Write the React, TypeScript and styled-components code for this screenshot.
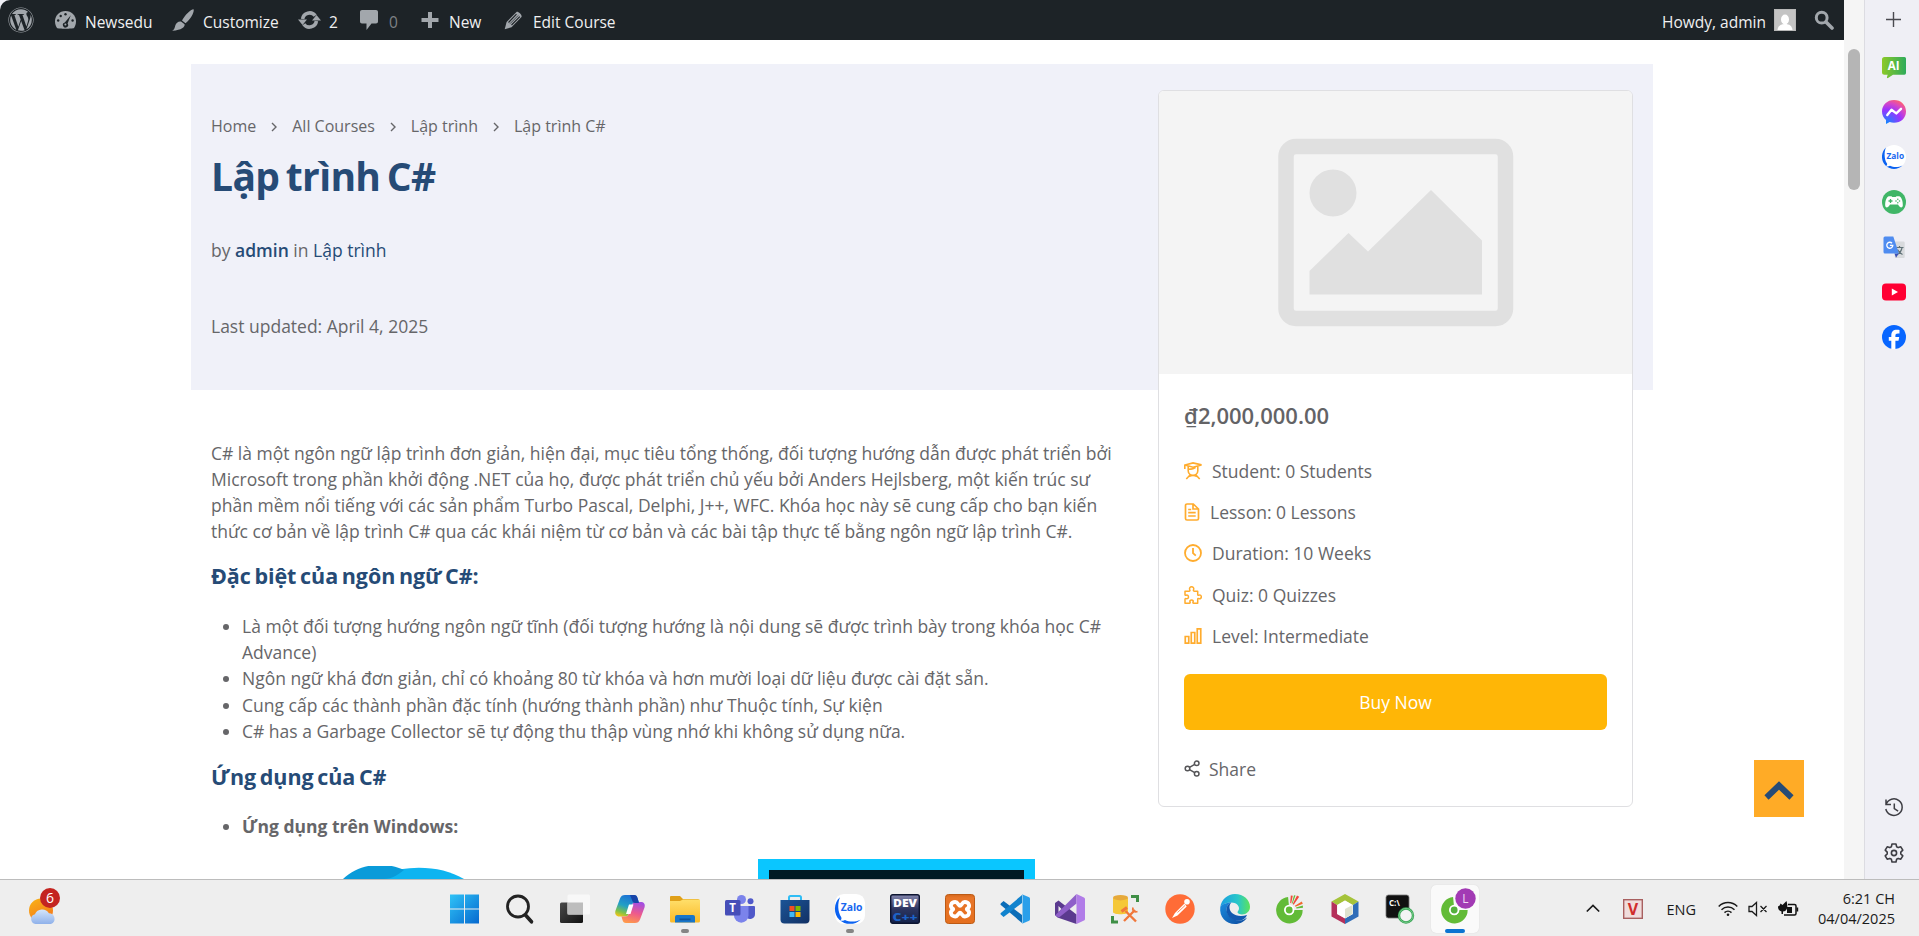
import React from 'react';
import styled, { createGlobalStyle } from 'styled-components';
import { FaWordpress } from 'react-icons/fa';

const GlobalStyle = createGlobalStyle`
  * { box-sizing: border-box; }
  body { margin: 0; background: #fff; overflow: hidden; }
`;

const Desktop = styled.div`
  display: flex;
  flex-direction: column;
  width: 1919px;
  height: 936px;
  font-family: 'Open Sans', 'Noto Sans', sans-serif;
  color: #666669;
  background: #fff;
`;
const Browser = styled.div`
  display: flex;
  height: 879px;
  background: #efeff5;
`;
const Viewport = styled.div`
  width: 1844px;
  height: 879px;
  overflow: hidden;
  background: #fff;
  border-top-left-radius: 10px;
  position: relative;
`;

/* ---------- admin bar ---------- */
const AdminBar = styled.header`
  display: flex;
  align-items: center;
  justify-content: space-between;
  height: 40px;
  padding: 0 10px 0 8px;
  background: #1d2327;
  color: #f0f0f1;
`;
const AdminGroup = styled.div`
  display: flex;
  align-items: center;
  height: 40px;
`;
const AdminItem = styled.div<{ $w: number; $gap?: number; $dim?: boolean }>`
  display: flex;
  align-items: center;
  gap: ${(p) => p.$gap ?? 9}px;
  width: ${(p) => p.$w}px;
  height: 40px;
  font-size: 15.5px;
  line-height: 40px;
  white-space: nowrap;
  color: ${(p) => (p.$dim ? '#7d8185' : '#f0f0f1')};
  padding-top: 3px;
  svg { flex: none; color: #a2a7ac; margin-top: -3px; }
`;
const Avatar = styled.span`
  width: 22px;
  height: 22px;
  margin-top: -3px;
  background: #c4c4c4;
  border: 1px solid #b8b8b8;
  overflow: hidden;
  line-height: 0;
  svg { margin: 0; }
`;

/* ---------- course page ---------- */
const Course = styled.main`
  display: grid;
  grid-template-columns: 967px 475px 20px;
  grid-template-rows: 326px auto;
  width: 1462px;
  margin: 24px 0 0 191px;
`;
const HeroBackground = styled.div`
  grid-column: 1 / -1;
  grid-row: 1;
  background: #f0f1f9;
`;
const HeroText = styled.section`
  grid-column: 1;
  grid-row: 1;
  padding: 50px 0 0 20px;
`;
const Breadcrumbs = styled.nav`
  display: flex;
  align-items: center;
  font-size: 16px;
  line-height: 24px;
  white-space: nowrap;
  svg { width: 36px; flex: none; margin-top: 1px; }
`;
const Title = styled.h1`
  margin: 14px 0 0;
  font-size: 39px;
  line-height: 48px;
  font-weight: 700;
  color: #264b76;
  white-space: nowrap;
  word-spacing: -3px;
  letter-spacing: -0.65px;
`;
const Meta = styled.p<{ $top: number }>`
  margin: ${(p) => p.$top}px 0 0;
  font-size: 17.5px;
  line-height: 26px;
  white-space: nowrap;
`;
const MetaLink = styled.a<{ $strong?: boolean }>`
  color: #264b76;
  font-weight: ${(p) => (p.$strong ? 600 : 400)};
`;
const Body = styled.section`
  grid-column: 1;
  grid-row: 2;
  padding: 50px 0 0 20px;
  font-size: 17.5px;
  line-height: 26px;
  white-space: nowrap;
`;
const Paragraph = styled.p`
  margin: 0;
`;
const Heading = styled.h3<{ $top: number }>`
  margin: ${(p) => p.$top}px 0 0;
  font-size: 21.5px;
  line-height: 30px;
  font-weight: 700;
  color: #264b76;
  word-spacing: -1.8px;
  letter-spacing: -0.07px;
`;
const List = styled.ul<{ $top: number; $bold?: boolean }>`
  margin: ${(p) => p.$top}px 0 0;
  padding: 0;
  list-style: none;
  font-weight: ${(p) => (p.$bold ? 700 : 400)};
`;
const Item = styled.li<{ $gap?: number }>`
  display: flex;
  margin-top: ${(p) => p.$gap ?? 0}px;
  &::before {
    content: '';
    flex: none;
    width: 6px;
    height: 6px;
    margin: 11px 13px 0 12px;
    border-radius: 50%;
    background: #666669;
  }
`;
const Figures = styled.div`
  display: flex;
  align-items: flex-start;
  margin-top: 20px;
  padding-left: 132px;
`;
const LogoFigure = styled.svg`
  display: block;
  margin-top: 7px;
  flex: none;
`;
const ScreenFigure = styled.div`
  width: 277px;
  height: 120px;
  margin-left: 294px;
  border: 11px solid #0ac6ff;
  background: #001b24;
`;

/* ---------- side card ---------- */
const Card = styled.aside`
  grid-column: 2;
  grid-row: 1 / span 2;
  align-self: start;
  height: 717px;
  margin-top: 26px;
  border: 1px solid #dfdfe2;
  border-radius: 6px;
  background: #fff;
  overflow: hidden;
`;
const Thumb = styled.div`
  height: 283px;
  background: #f4f4f4;
  svg { display: block; }
`;
const CardBody = styled.div`
  padding: 0 25px;
  font-size: 17.5px;
  white-space: nowrap;
`;
const Price = styled.div`
  margin-top: 25px;
  font-size: 22px;
  line-height: 32px;
  font-weight: 600;
  color: #636366;
`;
const Facts = styled.div`
  display: flex;
  flex-direction: column;
  margin-top: 19px;
`;
const Fact = styled.div`
  display: flex;
  align-items: center;
  height: 41.3px;
  gap: 10px;
  svg { flex: none; color: #ffac2e; }
`;
const BuyButton = styled.button`
  display: block;
  width: 423px;
  height: 56px;
  margin: 18px 0 0 0;
  padding: 0;
  border: 0;
  border-radius: 6px;
  background: #ffb606;
  color: #fff;
  font: 500 17.5px/56px 'Open Sans', sans-serif;
`;
const Share = styled.div`
  display: flex;
  align-items: center;
  gap: 8px;
  margin-top: 25px;
  height: 28px;
  line-height: 28px;
  svg { flex: none; margin-top: -2px; }
`;
const ToTop = styled.button`
  position: absolute;
  left: 1754px;
  top: 760px;
  width: 50px;
  height: 57px;
  padding: 0;
  border: 0;
  background: #ffab26;
  svg { display: block; margin: 5px auto 0; }
`;

/* ---------- browser chrome ---------- */
const Scrollbar = styled.div`
  width: 20px;
  padding: 49px 4px 0;
  background: #f5f5f5;
`;
const ScrollThumb = styled.div`
  width: 12px;
  height: 141px;
  border-radius: 6px;
  background: #b5b5b5;
`;
const SideBar = styled.aside`
  display: flex;
  flex-direction: column;
  align-items: center;
  justify-content: space-between;
  width: 55px;
  padding: 7px 0 14px 3px;
  border-left: 1px solid #dcdce2;
  background: #efeff5;
`;
const SideGroup = styled.div`
  display: flex;
  flex-direction: column;
  gap: 21px;
  svg { display: block; }
`;
const SideTop = styled.div`
  display: flex;
  flex-direction: column;
  gap: 24px;
`;

/* ---------- taskbar ---------- */
const Taskbar = styled.footer`
  display: grid;
  grid-template-columns: 437.5px 1045px 1fr;
  height: 57px;
  border-top: 1px solid #bcbcbc;
  background: #eeeeee;
  color: #1b1b1b;
`;
const Widgets = styled.div`
  padding: 10px 0 0 27px;
`;
const Apps = styled.div`
  display: flex;
`;
const AppSlot = styled.div`
  display: flex;
  flex-direction: column;
  align-items: center;
  width: 55px;
  height: 56px;
  padding: 14px 0 0;
  svg { display: block; flex: none; overflow: visible; }
`;
const ActiveTile = styled.div`
  display: flex;
  flex-direction: column;
  align-items: center;
  width: 48px;
  height: 48px;
  margin-top: -9px;
  padding-top: 9px;
  border-radius: 5px;
  background: #fafafa;
  box-shadow: 0 0 1px #ccc;
`;
const Running = styled.span<{ $active?: boolean }>`
  width: ${(p) => (p.$active ? 20 : 8)}px;
  height: 4px;
  margin-top: 5px;
  border-radius: 2px;
  background: ${(p) => (p.$active ? '#0a74d1' : '#858585')};
`;
const Tray = styled.div`
  display: flex;
  align-items: center;
  padding: 2px 0 0 103px;
  font-size: 14.5px;
  svg { flex: none; }
`;
const TrayIcon = styled.span<{ $ml: number }>`
  display: flex;
  margin-left: ${(p) => p.$ml}px;
`;
const Language = styled.span`
  margin-left: 24px;
  width: 29px;
  white-space: nowrap;
`;
const Clock = styled.div`
  margin-left: auto;
  margin-right: 24px;
  text-align: right;
  line-height: 20px;
`;
const Weather = styled.div`
  position: relative;
  width: 34px;
  height: 36px;
`;
const Badge = styled.span`
  position: absolute;
  left: 13px;
  top: -2px;
  width: 20px;
  height: 20px;
  border-radius: 50%;
  background: #c42420;
  color: #fff;
  font-size: 14px;
  line-height: 20px;
  text-align: center;
`;

/* ---------- drawings ---------- */
const Crumb = () => (
  <svg width="36" height="12" viewBox="0 0 36 12" fill="none" stroke="#666669" strokeWidth="1.4">
    <path d="M16 2l4 4-4 4" />
  </svg>
);
const Gauge = () => (
  <svg width="21" height="18" viewBox="0 0 21 18">
    <path fill="currentColor" d="M10.500 0C4.500 0 0 4.600 0 10.300c0 2.600.8 5 2 6.700 1 .9 15.800.9 17 0 1.200-1.700 2-4.100 2-6.700C21 4.600 16.500 0 10.500 0z" />
    <g fill="#1d2327">
      <circle cx="10.500" cy="3.300" r="1.200" /><circle cx="5.700" cy="5" r="1.200" /><circle cx="3.200" cy="9.500" r="1.200" />
      <circle cx="17.600" cy="9.500" r="1.200" /><path d="M15.800 4.200l-3.200 8.200a2.600 2.600 0 1 1-2.800-1z" />
    </g>
    <circle cx="10.400" cy="13.500" r="1" fill="currentColor" />
  </svg>
);
const Brush = () => (
  <svg width="22" height="22" viewBox="0 0 22 22" fill="currentColor">
    <path d="M21.600.3C22.500 3 19 10 13.500 14.300L10 11.500C13 6 18.500.6 21.600.3zM9 12.500l3.600 2.800c.3 2.300-2 5.600-12.400 6.400 2.300-1.500 2.500-3 3.100-5.300.6-2.400 3-4.300 5.700-3.900z" />
  </svg>
);
const Updates = () => (
  <svg width="23" height="20" viewBox="0 0 23 20" fill="none" stroke="currentColor" strokeWidth="3.600">
    <path d="M4.600 9a7 7 0 0 1 12.600-3.200" /><path d="M18.400 11a7 7 0 0 1-12.600 3.200" />
    <g fill="currentColor" stroke="none"><path d="M0 9.500h9L4.500 15zM14 10.500h9L18.500 5z" /></g>
  </svg>
);
const Comment = () => (
  <svg width="18" height="20" viewBox="0 0 18 20" fill="currentColor">
    <path d="M2 0h14c1.200 0 2 .8 2 2v9.500c0 1.200-.8 2-2 2h-4.500L6.500 20v-6.500H2c-1.200 0-2-.8-2-2V2C0 .8.800 0 2 0z" />
  </svg>
);
const Plus = () => (
  <svg width="18" height="18" viewBox="0 0 18 18" fill="currentColor"><path d="M7 1h4v6h6.500v4H11v6H7v-6H.500V7H7z" /></svg>
);
const Pencil = () => (
  <svg width="19" height="19" viewBox="0 0 19 19">
    <path fill="currentColor" d="M12.500 1c1.200-1.200 6 3 5 5L7.500 16.200.700 18.300 2.600 11z" />
    <path d="M4.500 11.500l8-8.300M7.500 14l8.300-8.400" stroke="#1d2327" strokeWidth="1.100" />
    <path d="M6 12.700L14.200 4.500" stroke="#1d2327" strokeWidth=".7" />
  </svg>
);
const BarSearch = () => (
  <svg width="20" height="20" viewBox="0 0 20 20" fill="none" stroke="currentColor">
    <circle cx="7.700" cy="7.700" r="5.400" strokeWidth="3" /><path d="M12 12l6 6" strokeWidth="3.600" strokeLinecap="round" />
  </svg>
);
const Placeholder = () => (
  <svg width="473" height="283" viewBox="1159 91 473 283">
    <rect x="1286" y="146.500" width="219.500" height="172" rx="10" fill="none" stroke="#e0e0e0" strokeWidth="15.500" />
    <circle cx="1333" cy="193" r="23.500" fill="#e0e0e0" />
    <path fill="#e0e0e0" d="M1309.500 271l39-38 19.500 18.500 63-61.500 51 50.500v54h-172.500z" />
  </svg>
);
const StudentIcon = () => (
  <svg width="18" height="18" viewBox="0 0 18 18" fill="none" stroke="currentColor" strokeWidth="1.600">
    <path d="M.800 7V3L9 .9l8.500 2L9 5.200 1 3M4.200 4.500v4.200a4.800 4.500 0 0 0 9.600 0V4.500M4.500 7.300c3-.2 5.500-.6 7-2M6.500 12.500L2.300 17M11.500 12.500l4.200 4.500M5 14.500c2.500-1.300 5.500-1.300 8 0" />
  </svg>
);
const LessonIcon = () => (
  <svg width="16" height="18" viewBox="0 0 16 18" fill="none" stroke="currentColor" strokeWidth="1.700">
    <path d="M3 1h6.300L14.500 6v9.500a1.500 1.500 0 0 1-1.500 1.500H3A1.500 1.500 0 0 1 1.500 15.500v-13A1.500 1.500 0 0 1 3 1zM9 1v5h5.300M4.200 6.500h3M4.200 9.700h7.500M4.200 13h7.500" />
  </svg>
);
const ClockIcon = () => (
  <svg width="18" height="18" viewBox="0 0 18 18" fill="none" stroke="currentColor" strokeWidth="1.800">
    <circle cx="9" cy="9" r="8" /><path d="M9 4v5.200l2.800 2.400" />
  </svg>
);
const PuzzleIcon = () => (
  <svg width="18" height="18" viewBox="0 0 18 18" fill="none" stroke="currentColor" strokeWidth="1.500" strokeLinejoin="round">
    <path d="M1 5.200h4.200c1 0 .8-.8.500-1.600-.5-1.500.3-2.800 1.900-2.800s2.500 1.300 2 2.700c-.3.9-.4 1.700.6 1.700h3.500v3.200c0 1 .7 1 1.400.7 1.200-.5 2.200.3 2.200 1.700s-1 2.300-2.300 1.800c-.7-.3-1.300-.2-1.300.7v3.900H9.600c-.8 0-.8-.6-.5-1.300.4-1.100-.3-2-1.500-2s-2 .9-1.600 2c.3.700.3 1.300-.6 1.300H1v-3.900c0-.8.600-.9 1.200-.7 1.200.4 2.300-.4 2.300-1.700S3.400 8.700 2.200 9.200C1.600 9.500 1 9.300 1 8.500z" />
  </svg>
);
const LevelIcon = () => (
  <svg width="18" height="18" viewBox="0 0 18 18" fill="none" stroke="currentColor" strokeWidth="1.700">
    <path d="M1.250 9.500h3.500v6.700h-3.500zM7.250 5.500h3.500v10.700h-3.500zM13.250 1.800h3.500v14.400h-3.500z" />
  </svg>
);
const ShareIcon = () => (
  <svg width="17" height="17" viewBox="0 0 17 17" fill="none" stroke="#555558" strokeWidth="1.500">
    <circle cx="3.500" cy="8.500" r="2.300" /><circle cx="12.700" cy="3.300" r="2.300" /><circle cx="12.700" cy="13.700" r="2.300" />
    <path d="M5.500 7.400l5.200-3M5.500 9.600l5.200 3" />
  </svg>
);

const SidePlus = () => (
  <svg width="24" height="24" viewBox="0 0 24 24"><path d="M11.500 5v15M4 12.500h15" stroke="#4a4a50" strokeWidth="1.400" /></svg>
);
const AiIcon = () => (
  <svg width="24" height="24" viewBox="0 0 24 24">
    <defs><linearGradient id="ai" x1="0" x2="1"><stop offset="0" stopColor="#8cc927" /><stop offset="1" stopColor="#2eab5b" /></linearGradient></defs>
    <path fill="url(#ai)" d="M2.500 2h20A1.600 1.600 0 0 1 24 3.600V18a1.700 1.700 0 0 1-1.600 1.700H11L6 23c-.8.400-1.300-.2-1-1l.7-2.300H2.500A2.500 2.500 0 0 1 0 17.200V4.500A2.500 2.500 0 0 1 2.500 2z" />
    <text x="11.700" y="15" textAnchor="middle" fontSize="11.500" fontWeight="700" fill="#fff" fontFamily="Open Sans, sans-serif">AI</text>
  </svg>
);
const MessengerIcon = () => (
  <svg width="24" height="24" viewBox="0 0 24 24">
    <defs><radialGradient id="ms" cx=".2" cy="1" r="1.100"><stop offset="0" stopColor="#0a8cff" /><stop offset=".55" stopColor="#9a33ff" /><stop offset=".8" stopColor="#d848c4" /><stop offset="1" stopColor="#ff6070" /></radialGradient></defs>
    <path fill="url(#ms)" d="M12 0C5.200 0 0 4.900 0 11.500c0 3.500 1.500 6.500 4 8.600V24l3.700-1.900c1.300.4 2.800.6 4.300.6 6.800 0 12-4.700 12-11.300S18.800 0 12 0z" />
    <path d="M5.300 15l4.200-5.200 4.800 3.600 4.700-4.600" fill="none" stroke="#fff" strokeWidth="2.400" strokeLinejoin="round" strokeLinecap="round" />
  </svg>
);
const ZaloIcon = ({ size = 24, r = 12 }: { size?: number; r?: number }) => (
  <svg width={size} height={size} viewBox="0 0 24 24">
    <rect width="24" height="24" rx={r} fill="#fff" />
    <path fill="#0b62f1" d="M4 2.500C-1.300 7-1.300 16 3.500 20.500 8 25 16 25 20.500 20.500c-4 2-9 2-12.500.3-1.500.7-3 .8-4 .5 1-.7 1.500-1.800 1-2.800C2 14 2 7 4 2.500z" />
    <text x="13.300" y="13.800" textAnchor="middle" fontSize="8.300" fontWeight="700" fill="#1767ef" fontFamily="Open Sans, sans-serif">Zalo</text>
  </svg>
);
const GameIcon = () => (
  <svg width="24" height="24" viewBox="0 0 24 24">
    <circle cx="12" cy="12" r="12" fill="#40b667" />
    <path fill="#fff" d="M7 6.200h2.500l.8.900h3.400l.8-.9H17c2.500.4 4 5 3.800 9.300-.2 2.400-2.500 2.500-3.800.5l-1-1.600H8L7 16c-1.300 2-3.600 1.900-3.800-.5C3 11.200 4.500 6.600 7 6.200z" />
    <path d="M8.500 9v4M6.500 11h4" stroke="#40b667" strokeWidth="1.300" /><g fill="#40b667"><circle cx="14" cy="11" r=".8" /><circle cx="17.500" cy="11" r=".8" /><circle cx="15.800" cy="9.300" r=".8" /><circle cx="15.800" cy="12.700" r=".8" /></g>
  </svg>
);
const TranslateIcon = () => (
  <svg width="24" height="24" viewBox="0 0 24 24">
    <path fill="#d8dadd" d="M11 6.500h10.500a1.200 1.200 0 0 1 1.200 1.200v14a1.200 1.200 0 0 1-1.200 1.300H13z" />
    <path d="M13.500 12.500h8M17.500 11v1.500M20 13c-.8 3-3 5.500-5 6.500M15.500 14.500c1 2.200 3 4 5 5" stroke="#5f7076" strokeWidth="1.200" fill="none" />
    <path fill="#3a4fb5" d="M12.500 18.500h4.300L14 22.700z" />
    <path fill="#4f8cf0" d="M3 1.500h8.300l5.600 17H3a1.500 1.500 0 0 1-1.500-1.500V3A1.500 1.500 0 0 1 3 1.500z" />
    <path d="M10 8.200a3 3 0 1 0 .8 2.200H7.900" stroke="#fff" strokeWidth="1.300" fill="none" />
  </svg>
);
const YoutubeIcon = () => (
  <svg width="24" height="24" viewBox="0 0 24 24"><rect y="3.500" width="24" height="17" rx="4" fill="#ff0033" /><path d="M9.800 8.500l6.200 3.500-6.200 3.500z" fill="#fff" /></svg>
);
const FacebookIcon = () => (
  <svg width="24" height="24" viewBox="0 0 24 24">
    <circle cx="12" cy="12" r="12" fill="#0866ff" />
    <path fill="#fff" d="M9.300 24v-8.200H6.800v-3.700h2.500v-1.500c0-4 1.800-5.800 5.700-5.800.8 0 1.900.1 2.500.3v3.300h-1.500c-1.900 0-2.600.7-2.600 2.400v1.300h3.800l-.7 3.700h-3.100V24z" />
  </svg>
);
const HistoryIcon = () => (
  <svg width="24" height="24" viewBox="0 0 24 24" fill="none" stroke="#3e3e44" strokeWidth="1.500">
    <path d="M4 8.500A8.300 8.300 0 1 1 3.800 13M4 3.500v5h5M12.300 7.500v5.200l3.800 2.500" />
  </svg>
);
const GearIcon = () => (
  <svg width="24" height="24" viewBox="0 0 24 24" fill="none" stroke="#3e3e44" strokeWidth="1.600" strokeLinejoin="round">
    <circle cx="12" cy="12" r="2.600" />
    <path d="M10 3h4l.6 2.700 1.600.9 2.600-.8 2 3.400-2 1.900v1.800l2 1.900-2 3.400-2.600-.8-1.600.9L14 21h-4l-.6-2.700-1.600-.9-2.600.8-2-3.400 2-1.900v-1.800l-2-1.900 2-3.400 2.600.8 1.600-.9z" />
  </svg>
);

const WeatherIcon = () => (
  <svg width="34" height="36" viewBox="0 0 34 36">
    <defs>
      <linearGradient id="sun" x1="0" y1="0" x2=".5" y2="1"><stop offset="0" stopColor="#f8b416" /><stop offset="1" stopColor="#f57a1c" /></linearGradient>
      <linearGradient id="cl" x1="0" y1="0" x2="0" y2="1"><stop offset="0" stopColor="#d5e6fb" /><stop offset="1" stopColor="#8fb1ea" /></linearGradient>
    </defs>
    <circle cx="14" cy="20.500" r="12" fill="url(#sun)" />
    <path fill="url(#cl)" d="M8.500 34a5 5 0 0 1-.6-9.800 8 8 0 0 1 14-1A5.600 5.600 0 0 1 24 34z" />
  </svg>
);
const WindowsIcon = () => (
  <svg width="30" height="30" viewBox="0 0 30 30">
    <defs><linearGradient id="win" x1="0" y1="0" x2="1" y2="1"><stop offset="0" stopColor="#2fc3f7" /><stop offset="1" stopColor="#0669cf" /></linearGradient></defs>
    <path fill="url(#win)" d="M0 .500h14v14H0zM15 .500h14v14h-14zM0 15.500h14v14H0zM15 15.500h14v14h-14z" />
  </svg>
);
const SearchIcon = () => (
  <svg width="30" height="30" viewBox="0 0 30 30" fill="none" stroke="#222" strokeLinecap="round"><circle cx="13" cy="12.500" r="10.500" strokeWidth="2.800" /><path d="M20.500 21l6 6.800" strokeWidth="3.600" /></svg>
);
const TaskViewIcon = () => (
  <svg width="30" height="30" viewBox="0 0 30 30">
    <defs><linearGradient id="tv" x1="0" y1="0" x2="1" y2="1"><stop offset="0" stopColor="#4a4a4a" /><stop offset="1" stopColor="#111" /></linearGradient></defs>
    <rect x="0" y="8.500" width="23" height="20.500" rx="1.500" fill="url(#tv)" /><rect x="7.500" y=".5" width="22.500" height="20" rx="1.500" fill="#f8f8f8" /><path fill="#bdbdbd" d="M7.500 8.500H23v12H7.500z" />
  </svg>
);
const CopilotIcon = () => (
  <svg width="30" height="30" viewBox="0 0 30 30">
    <defs>
      <linearGradient id="c1" x1=".6" y1="0" x2=".2" y2="1"><stop offset="0" stopColor="#1c6fd6" /><stop offset=".5" stopColor="#23a0c5" /><stop offset=".8" stopColor="#7fc24a" /><stop offset="1" stopColor="#f0c419" /></linearGradient>
      <linearGradient id="c2" x1=".6" y1="0" x2=".3" y2="1"><stop offset="0" stopColor="#a44ee0" /><stop offset=".5" stopColor="#ee5a8c" /><stop offset="1" stopColor="#ff9a4a" /></linearGradient>
    </defs>
    <path fill="url(#c1)" d="M10 1h9c2 0 3 1 3.500 3l1.500 5h-4c-2 0-3 .7-3.600 2.600L13.500 20c-.6 2-1.500 2.500-3 2.500H4.500C1 22.500-.5 20 .5 16.500L5 4.500C5.900 2 7.500 1 10 1z" />
    <path fill="url(#c2)" d="M20 29h-9c-2 0-3-1-3.500-3L6.500 22.500h4c2 0 2.500-.7 3-2.500L17 11.500C17.600 9.700 18.500 8 20 8h5.500C29 8 30.500 10 29.500 13.500L25 25.500c-.9 2.500-2.500 3.500-5 3.500z" />
    <path fill="#fff" d="M14 10.500h4.500L15.500 20H11z" />
    <path fill="#1744a8" d="M15 1h4c2 0 3 1 3.500 3L24 9h-4c-1.500 0-2.500-1-3-3z" />
  </svg>
);
const ExplorerIcon = () => (
  <svg width="30" height="30" viewBox="0 0 30 30">
    <defs><linearGradient id="ex" x1="0" y1="0" x2="0" y2="1"><stop offset="0" stopColor="#ffdf6b" /><stop offset="1" stopColor="#fbba27" /></linearGradient></defs>
    <path fill="#e0a019" d="M1 2h9l3 3h15a1.500 1.500 0 0 1 1.500 1.500V12H0V3a1 1 0 0 1 1-1z" /><path fill="url(#ex)" d="M0 7h10l3-1.500h16.500A.8.800 0 0 1 30 6.500V27a1.500 1.500 0 0 1-1.500 1.500h-27A1.500 1.500 0 0 1 0 27z" />
    <path fill="#1976c9" d="M7 21h16a2 2 0 0 1 2 2v5.500H5V23a2 2 0 0 1 2-2z" /><path fill="#11559b" d="M9.500 24.500h11v1.800h-11z" />
  </svg>
);
const TeamsIcon = () => (
  <svg width="30" height="30" viewBox="0 0 30 30">
    <circle cx="16.500" cy="5.500" r="4.500" fill="#7b83eb" /><circle cx="25.500" cy="7.200" r="3" fill="#5059c9" />
    <path fill="#5059c9" d="M20 12h9a1 1 0 0 1 1 1v7a5 5 0 0 1-9 3z" /><path fill="#7b83eb" d="M9 12h14.500v9.500a7.200 7.200 0 0 1-14.500 0z" />
    <rect y="6" width="15.500" height="15.500" rx="1.500" fill="#464eb8" />
    <text x="7.700" y="18" textAnchor="middle" fontSize="11.500" fontWeight="700" fill="#fff" fontFamily="Open Sans, sans-serif">T</text>
  </svg>
);
const StoreIcon = () => (
  <svg width="30" height="30" viewBox="0 0 30 30">
    <defs><linearGradient id="st" x1="0" y1="0" x2="1" y2="1"><stop offset="0" stopColor="#1b5597" /><stop offset="1" stopColor="#123064" /></linearGradient></defs>
    <path d="M9 7V3.500A1.500 1.500 0 0 1 10.500 2h9A1.500 1.500 0 0 1 21 3.500V7" fill="none" stroke="#2fbdf5" strokeWidth="2" />
    <path fill="url(#st)" d="M.500 6h29v19.500a4 4 0 0 1-4 4h-21a4 4 0 0 1-4-4z" />
    <path fill="#f25022" d="M9.500 12h5v5h-5z" /><path fill="#7fba00" d="M15.500 12h5v5h-5z" /><path fill="#40b8f4" d="M9.500 18h5v5h-5z" /><path fill="#ffb900" d="M15.500 18h5v5h-5z" />
  </svg>
);
const DevIcon = () => (
  <svg width="30" height="30" viewBox="0 0 30 30">
    <defs><linearGradient id="dv" x1="0" y1="0" x2="0" y2="1"><stop offset="0" stopColor="#8587ae" /><stop offset=".5" stopColor="#2c3560" /><stop offset="1" stopColor="#14224a" /></linearGradient></defs>
    <rect x=".7" y=".7" width="28.600" height="28.600" rx="2" fill="url(#dv)" stroke="#0c1430" strokeWidth="1.400" />
    <text x="15" y="12.800" textAnchor="middle" fontSize="10.500" fontWeight="800" fill="#fff" fontFamily="Open Sans, sans-serif" textLength="24" lengthAdjust="spacingAndGlyphs">DEV</text>
    <text x="15" y="27" textAnchor="middle" fontSize="10.500" fontWeight="800" fill="#1d63c8" fontFamily="Open Sans, sans-serif" textLength="25" lengthAdjust="spacingAndGlyphs">C++</text>
  </svg>
);
const XamppIcon = () => (
  <svg width="30" height="30" viewBox="0 0 30 30">
    <defs><linearGradient id="xa" x1="0" y1="0" x2="0" y2="1"><stop offset="0" stopColor="#d5671c" /><stop offset=".12" stopColor="#e8762a" /><stop offset="1" stopColor="#e56f1e" /></linearGradient></defs>
    <rect x=".5" y=".5" width="29" height="29" rx="3" fill="url(#xa)" stroke="#bd5a14" />
    <path d="M10.200 8C13 8 13.500 11.800 15 11.800S17 8 19.800 8C24 8 25.500 12.500 22.500 14.300c-1 .6-1 1.100 0 1.700C25.500 17.800 24 22.500 19.800 22.500 17 22.500 16.500 18.700 15 18.700S13 22.500 10.200 22.500C6 22.500 4.500 17.800 7.500 16c1-.6 1-1.100 0-1.700C4.500 12.500 6 8 10.200 8z" fill="none" stroke="#fff" strokeWidth="3.800" strokeLinejoin="round" />
  </svg>
);
const VscodeIcon = () => (
  <svg width="30" height="30" viewBox="0 0 30 30">
    <path fill="#0b6db8" d="M1 9.200l2.600-2.200L22 21v8L.8 11c-.5-.5-.3-1.300.2-1.800z" /><path fill="#1183ce" d="M1 20.800l2.600 2.200L22 9V1L.8 19c-.5.500-.3 1.300.2 1.800z" />
    <path fill="#2a9fea" d="M22 .2l6.500 2.800c1 .4 1.500 1 1.500 2v20c0 1-.5 1.600-1.500 2L22 29.800c.5-.5.500-1 .5-2V2.200c0-1 0-1.500-.5-2z" />
  </svg>
);
const VsIcon = () => (
  <svg width="30" height="30" viewBox="0 0 30 30">
    <path fill="#5b3a8f" d="M0 9l3.500-2.500 18 14V30L2.500 23.500 0 21z" /><path fill="#eee" d="M3.500 12v6l3-3z" />
    <path fill="#8f5fc9" d="M0 21.500l3.500-3.500L21.500 0v9.500L4 23.500z" />
    <path fill="#b17ce8" d="M21.500 0l7.500 3.500c.7.300 1 .9 1 1.500v20c0 .7-.3 1.200-1 1.500L21.500 30z" />
  </svg>
);
const DbIcon = () => (
  <svg width="30" height="30" viewBox="0 0 30 30">
    <path fill="#f5c838" d="M3 4h15v14c0 3-15 3-15 0z" /><ellipse cx="10.500" cy="3.700" rx="7.500" ry="2.700" fill="#e6a93a" />
    <path fill="none" stroke="#3f8f46" strokeWidth="3" d="M21 2.500h6.500V8M2.500 22v6H8" />
    <path d="M14 27l11-11M15.500 17l10.500 10.500" stroke="#f0783c" strokeWidth="2.400" /><path d="M11.500 17.500l5.500-4" stroke="#f0783c" strokeWidth="3" /><path d="M23 13.500c-1 3 1.500 5 4.500 4" stroke="#f0783c" strokeWidth="1.800" fill="none" />
  </svg>
);
const PostmanIcon = () => (
  <svg width="30" height="30" viewBox="0 0 30 30">
    <circle cx="15" cy="15" r="14.700" fill="#ff6c37" /><circle cx="22" cy="7.800" r="2.800" fill="#fff" /><path fill="#fff" d="M19.500 9.500l2.200 3L12.500 21.500 7 24l3-5z" /><path d="M12.500 18.500l7.500-7" stroke="#ff6c37" strokeWidth=".8" />
  </svg>
);
const EdgeIcon = () => (
  <svg width="30" height="30" viewBox="0 0 30 30">
    <defs>
      <linearGradient id="e1" x1="0" y1=".3" x2="1" y2=".3"><stop offset="0" stopColor="#1a9ee2" /><stop offset=".6" stopColor="#29c8c8" /><stop offset="1" stopColor="#5de35a" /></linearGradient>
      <linearGradient id="e2" x1="0" y1="0" x2="1" y2="1"><stop offset="0" stopColor="#1b8de0" /><stop offset="1" stopColor="#0c4a9e" /></linearGradient>
    </defs>
    <path fill="url(#e1)" d="M.300 13C1.500 5.500 7.500 0 15 0c8.500 0 15 6 15 12.800 0 4.700-3.600 7.700-8 7.700-2.500 0-4.500-1-4.500-2.200 0-1 1.500-1.500 1.500-4 0-3-3-5.800-7.500-5.800C6.500 8.500 2.500 10 .3 13z" />
    <path fill="url(#e2)" d="M.300 13C2 10 6.500 8.500 11.500 8.500c-4 1.500-5.300 5-4.700 8.500.8 5.500 6.500 10 13 9.500 3-.2 5.500-1.500 7.200-3-2.300 4-6.700 6.500-12 6.500C6 30-1 23 .3 13z" />
    <path fill="#1259b0" d="M11.500 8.500c-3 2.500-2.500 7.500.500 10.500 4 3.500 10 3.500 15 2-1.500 4-5.500 6-9.500 5.800C11 26.500 5.800 21 6.500 15c.3-3 2-5.500 5-6.500z" />
  </svg>
);
const CocCocIcon = ({ rays = true }: { rays?: boolean }) => (
  <svg width="30" height="30" viewBox="0 0 30 30">
    <path fill="none" stroke="#62bb37" strokeWidth="8.500" d="M13.500 7.200A9 9 0 1 0 23.400 16" />
    {rays && (
      <g>
        <path fill="#ef4b3a" d="M15.800 1.500l2 .3-1.600 7.500-1-.2zM22 1.500l2.200 1.300-5.500 8-1-.7z" />
        <path fill="#f0692e" d="M26.800 7.500l1 2.200-7.300 3-.6-1z" />
        <path fill="#62bb37" d="M19 1.300l1.500.3-3 8-.7-.2zM27.800 11.500l.2 2.300-6.500.7-.5-1z" />
      </g>
    )}
    <circle cx="14.200" cy="16" r="4.300" fill={rays ? '#62bb37' : '#54b13c'} stroke="#fff" strokeWidth="1.800" />
    {!rays && <g><circle cx="25.500" cy="4.500" r="10.200" fill="#a23ab4" /><text x="25.500" y="9" textAnchor="middle" fontSize="12" fill="#efd7f3" fontFamily="Open Sans, sans-serif">L</text></g>}
  </svg>
);
const NetBeansIcon = () => (
  <svg width="30" height="30" viewBox="0 0 30 30">
    <path fill="#a5c33a" d="M15 0l13.500 7.500L23 11l-8-4.500L7 11 1.500 7.500z" /><path fill="#b5305a" d="M1.500 7.500L7 11v9l8 4.500V30L1.500 22.500z" /><path fill="#2f6db8" d="M28.500 7.500L23 11v9l-8 4.500V30l13.500-7.500z" />
    <path fill="#fff" d="M15 6.500L22.500 11v9L15 24.300 7.500 20v-9z" /><path fill="#dfe3cf" d="M15 15l7.500-4v9L15 24.300z" />
  </svg>
);
const CmdIcon = () => (
  <svg width="30" height="30" viewBox="0 0 30 30">
    <rect x="1" y="1" width="23" height="23" rx="2.500" fill="#111" stroke="#777" strokeWidth=".8" />
    <text x="4" y="11.500" fontSize="8" fontWeight="700" fill="#fff" fontFamily="Open Sans, sans-serif">C:\</text>
    <circle cx="21" cy="21.500" r="7" fill="#f4f4f4" stroke="#39a455" strokeWidth="2.400" /><circle cx="21" cy="21.500" r="7" fill="none" stroke="#7fd090" strokeWidth=".8" />
  </svg>
);

const apps: { el: React.ReactNode; running?: boolean }[] = [
  { el: <WindowsIcon /> },
  { el: <SearchIcon /> },
  { el: <TaskViewIcon /> },
  { el: <CopilotIcon /> },
  { el: <ExplorerIcon />, running: true },
  { el: <TeamsIcon /> },
  { el: <StoreIcon /> },
  { el: <ZaloIcon size={30} r={7} />, running: true },
  { el: <DevIcon /> },
  { el: <XamppIcon /> },
  { el: <VscodeIcon /> },
  { el: <VsIcon /> },
  { el: <DbIcon /> },
  { el: <PostmanIcon /> },
  { el: <EdgeIcon /> },
  { el: <CocCocIcon /> },
  { el: <NetBeansIcon /> },
  { el: <CmdIcon /> },
];

export default function App() {
  return (
    <Desktop>
      <GlobalStyle />
      <Browser>
        <Viewport>
          <AdminBar>
            <AdminGroup>
              <AdminItem $w={47}><FaWordpress size={26} /></AdminItem>
              <AdminItem $w={117}><Gauge />Newsedu</AdminItem>
              <AdminItem $w={126}><Brush />Customize</AdminItem>
              <AdminItem $w={62} $gap={8}><Updates />2</AdminItem>
              <AdminItem $w={61} $gap={11} $dim><Comment />0</AdminItem>
              <AdminItem $w={83} $gap={10}><Plus />New</AdminItem>
              <AdminItem $w={120} $gap={10}><Pencil />Edit Course</AdminItem>
            </AdminGroup>
            <AdminGroup>
              <AdminItem $w={152} $gap={8}>
                Howdy, admin
                <Avatar>
                  <svg width="20" height="20" viewBox="0 0 20 20"><g fill="#fff"><ellipse cx="10" cy="9.500" rx="4" ry="5" /><path d="M2.500 20c.5-4 3-6 7.500-6s7 2 7.500 6z" /></g></svg>
                </Avatar>
              </AdminItem>
              <AdminItem $w={20}><BarSearch /></AdminItem>
            </AdminGroup>
          </AdminBar>
          <Course>
            <HeroBackground />
            <HeroText>
              <Breadcrumbs>
                Home<Crumb />All Courses<Crumb />Lập trình<Crumb />Lập trình C#
              </Breadcrumbs>
              <Title>Lập trình C#</Title>
              <Meta $top={37}>by <MetaLink $strong>admin</MetaLink> in <MetaLink>Lập trình</MetaLink></Meta>
              <Meta $top={50}>Last updated: April 4, 2025</Meta>
            </HeroText>
            <Body>
              <Paragraph>
                C# là một ngôn ngữ lập trình đơn giản, hiện đại, mục tiêu tổng thống, đối tượng hướng dẫn được phát triển bởi<br />
                Microsoft trong phần khởi động .NET của họ, được phát triển chủ yếu bởi Anders Hejlsberg, một kiến trúc sư<br />
                phần mềm nổi tiếng với các sản phẩm Turbo Pascal, Delphi, J++, WFC. Khóa học này sẽ cung cấp cho bạn kiến<br />
                thức cơ bản về lập trình C# qua các khái niệm từ cơ bản và các bài tập thực tế bằng ngôn ngữ lập trình C#.
              </Paragraph>
              <Heading $top={17}>Đặc biệt của ngôn ngữ C#:</Heading>
              <List $top={22}>
                <Item><span>Là một đối tượng hướng ngôn ngữ tĩnh (đối tượng hướng là nội dung sẽ được trình bày trong khóa học C#<br />Advance)</span></Item>
                <Item>Ngôn ngữ khá đơn giản, chỉ có khoảng 80 từ khóa và hơn mười loại dữ liệu được cài đặt sẵn.</Item>
                <Item $gap={1}>Cung cấp các thành phần đặc tính (hướng thành phần) như Thuộc tính, Sự kiện</Item>
                <Item>C# has a Garbage Collector sẽ tự động thu thập vùng nhớ khi không sử dụng nữa.</Item>
              </List>
              <Heading $top={18}>Ứng dụng của C#</Heading>
              <List $top={21} $bold>
                <Item>Ứng dụng trên Windows:</Item>
              </List>
              <Figures>
                <LogoFigure width="121" height="30" viewBox="0 0 121 30">
                  <path fill="#0fb4f0" d="M40 30V8C66-2 100 0 121 13v17z" />
                  <path fill="#0a9bd9" d="M0 13C18-4 44-4 61 4 56 8 50 13 40 13v17H0z" />
                </LogoFigure>
                <ScreenFigure />
              </Figures>
            </Body>
            <Card>
              <Thumb><Placeholder /></Thumb>
              <CardBody>
                <Price>₫2,000,000.00</Price>
                <Facts>
                  <Fact><StudentIcon />Student: 0 Students</Fact>
                  <Fact><LessonIcon />Lesson: 0 Lessons</Fact>
                  <Fact><ClockIcon />Duration: 10 Weeks</Fact>
                  <Fact><PuzzleIcon />Quiz: 0 Quizzes</Fact>
                  <Fact><LevelIcon />Level: Intermediate</Fact>
                </Facts>
                <BuyButton>Buy Now</BuyButton>
                <Share><ShareIcon />Share</Share>
              </CardBody>
            </Card>
          </Course>
          <ToTop aria-label="Back to top">
            <svg width="30" height="20" viewBox="0 0 30 20"><path d="M2.500 16.500L15 4.500l12.500 12" fill="none" stroke="#264b76" strokeWidth="6" /></svg>
          </ToTop>
        </Viewport>
        <Scrollbar><ScrollThumb /></Scrollbar>
        <SideBar>
          <SideTop>
            <SidePlus />
            <SideGroup>
              <AiIcon />
              <MessengerIcon />
              <ZaloIcon />
              <GameIcon />
              <TranslateIcon />
              <YoutubeIcon />
              <FacebookIcon />
            </SideGroup>
          </SideTop>
          <SideGroup>
            <HistoryIcon />
            <GearIcon />
          </SideGroup>
        </SideBar>
      </Browser>
      <Taskbar>
        <Widgets><Weather><WeatherIcon /><Badge>6</Badge></Weather></Widgets>
        <Apps>
          {apps.map((a, i) => (
            <AppSlot key={i}>{a.el}{a.running && <Running />}</AppSlot>
          ))}
          <AppSlot>
            <ActiveTile><CocCocIcon rays={false} /><Running $active /></ActiveTile>
          </AppSlot>
        </Apps>
        <Tray>
          <svg width="14" height="14" viewBox="0 0 14 14" fill="none" stroke="#1b1b1b" strokeWidth="1.700"><path d="M.800 9.500L7 3.500l6.200 6" /></svg>
          <TrayIcon $ml={23}>
            <svg width="20" height="20" viewBox="0 0 20 20"><rect x=".7" y=".7" width="18.600" height="18.600" fill="#f0dcdc" stroke="#a86060" strokeWidth="1.400" /><text x="10" y="16" textAnchor="middle" fontSize="16" fontWeight="700" fill="#d02c2c" fontFamily="Open Sans, sans-serif">V</text></svg>
          </TrayIcon>
          <Language>ENG</Language>
          <TrayIcon $ml={22}>
            <svg width="20" height="16" viewBox="0 0 20 16" fill="none" stroke="#1b1b1b" strokeWidth="1.500"><path d="M.700 5.500C6 .3 14 .3 19.300 5.500M3.500 8.700c3.800-3.500 9.200-3.500 13 0M6.500 11.600c2-1.800 5-1.800 7 0" /><circle cx="10" cy="13.800" r="1.300" fill="#1b1b1b" stroke="none" /></svg>
          </TrayIcon>
          <TrayIcon $ml={10}>
            <svg width="20" height="16" viewBox="0 0 20 16" fill="none" stroke="#1b1b1b" strokeWidth="1.300"><path d="M1 5.500h3L8.500 1.500v13L4 10.500H1zM12.500 5l6 6M18.500 5l-6 6" /></svg>
          </TrayIcon>
          <TrayIcon $ml={10}>
            <svg width="21" height="18" viewBox="0 0 21 18"><path d="M10 4.500h6.500A1.500 1.500 0 0 1 18 6v7.500a1.500 1.500 0 0 1-1.500 1.500H6" fill="none" stroke="#111" strokeWidth="1.500" /><path fill="#111" d="M18.500 7.500h1.700v4h-1.700zM9 13V7h5v6zM8.500 1C9 3 9.500 5 9.300 7c-.3 3-2.300 4.500-4.300 4.500V14H3.500v-2.500C1 11 0 9 0 6.500 1.500 6 2 5 2.500 3.500L4.500 5z" /></svg>
          </TrayIcon>
          <Clock>6:21 CH<br />04/04/2025</Clock>
        </Tray>
      </Taskbar>
    </Desktop>
  );
}
